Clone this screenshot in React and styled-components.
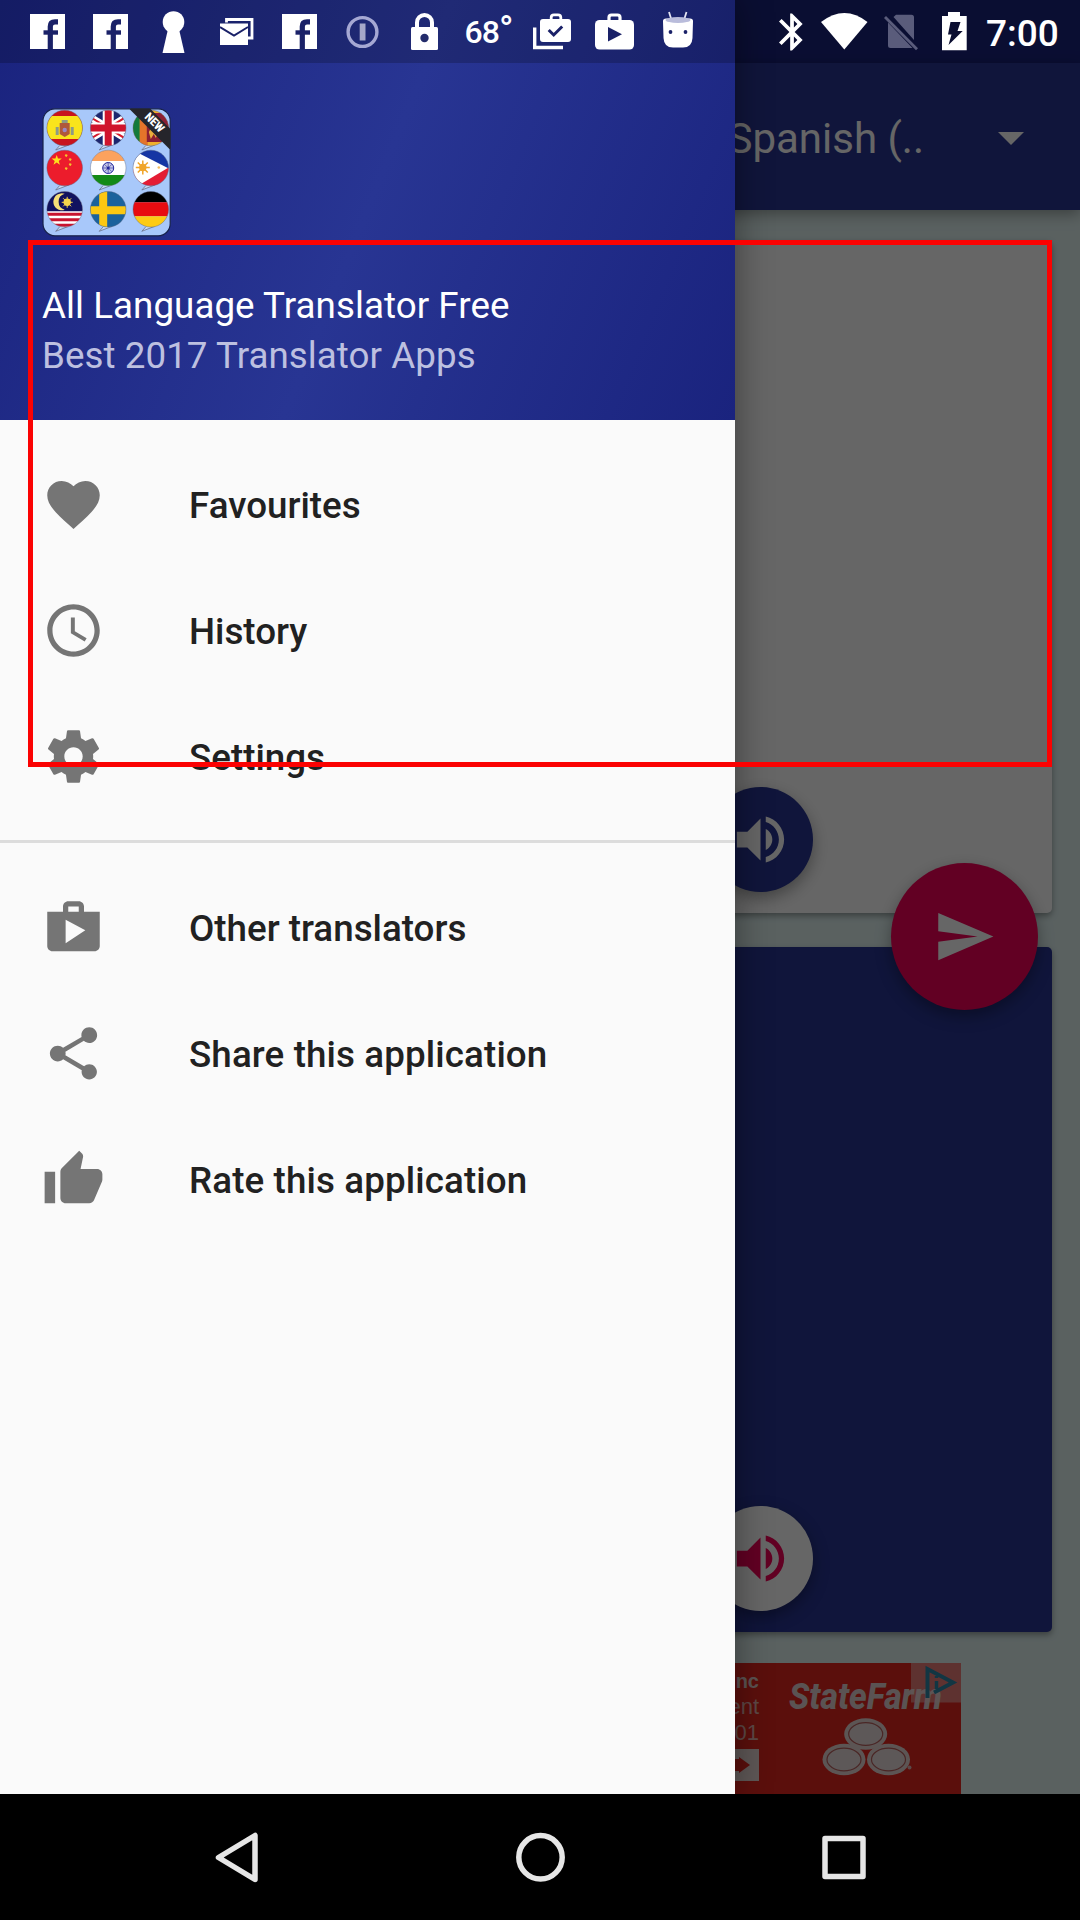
import React from "react";
import styled, { createGlobalStyle } from "styled-components";

const GlobalStyle = createGlobalStyle`
  * { box-sizing: border-box; }
  body { margin: 0; background: #000; font-family: Roboto, "Liberation Sans", sans-serif; }
  svg { display: block; flex: none; }
`;

const Screen = styled.div`
  position: relative;
  width: 1080px;
  height: 1920px;
  overflow: hidden;
  display: flex;
  flex-direction: column;
  background: #000;
`;

/* ---------- translator page under the drawer ---------- */
const Page = styled.main`
  position: relative;
  height: 1794px;
  display: flex;
  flex-direction: column;
  background: #e0f2f1;
  overflow: hidden;
`;
const StatusBacking = styled.div`
  height: 63px;
  background: #1a237e;
`;
const Toolbar = styled.header`
  height: 147px;
  display: flex;
  align-items: center;
  justify-content: flex-end;
  gap: 74px;
  padding: 4px 56px 0 0;
  background: #283593;
  color: #fff;
  box-shadow: 0 4px 14px rgba(0, 0, 0, 0.35);
`;
const Language = styled.span`
  font-size: 42px;
  line-height: 50px;
`;
const Caret = styled.span`
  border: 13px solid transparent;
  border-top-color: #fff;
  border-bottom: 0;
`;
const Content = styled.div`
  display: flex;
  flex-direction: column;
  align-items: center;
  padding: 30px 28px 0;
`;
const Card = styled.section`
  width: 1024px;
  height: ${(p) => p.$height}px;
  margin-bottom: ${(p) => p.$gap}px;
  padding: 0 239px 21px 0;
  display: flex;
  justify-content: flex-end;
  align-items: flex-end;
  border-radius: 5px;
  background: ${(p) => p.$color};
  box-shadow: 0 3px 6px rgba(0, 0, 0, 0.35);
`;
const RoundButton = styled.button`
  width: ${(p) => p.$size}px;
  height: ${(p) => p.$size}px;
  padding: 0;
  border: 0;
  border-radius: 50%;
  display: flex;
  align-items: center;
  justify-content: center;
  background: ${(p) => p.$color};
  color: ${(p) => p.$ink};
  box-shadow: 0 6px 16px rgba(0, 0, 0, 0.35);
`;
const SendSlot = styled.div`
  position: absolute;
  left: 891px;
  top: 863px;
`;
const Ad = styled.aside`
  width: 842px;
  height: 131px;
  display: flex;
  justify-content: flex-end;
  background: #e4261e;
  color: #fff;
  overflow: hidden;
`;
const AdCopy = styled.div`
  display: flex;
  flex-direction: column;
  align-items: flex-end;
  padding-top: 5px;
  font: 22px/26px "Liberation Sans", sans-serif;
  color: #e8b5b0;
`;
const AdCopyLead = styled.span`
  font-size: 20px;
  font-weight: 700;
  color: #e4cfcc;
`;
const AdArrow = styled.span`
  width: 50px;
  height: 32px;
  margin-top: 3px;
  display: flex;
  align-items: center;
  justify-content: flex-end;
  padding-right: 9px;
  background: #ead9d8;
`;
const AdBrand = styled.div`
  width: 202px;
`;
const Scrim = styled.div`
  position: absolute;
  inset: 0;
  background: rgba(0, 0, 0, 0.6);
`;

/* ---------- navigation drawer ---------- */
const Drawer = styled.nav`
  position: absolute;
  left: 0;
  top: 0;
  width: 735px;
  height: 1794px;
  background: #fafafa;
  box-shadow: 0 0 34px rgba(0, 0, 0, 0.42);
`;
const DrawerHeader = styled.div`
  height: 420px;
  padding: 109px 42px 0;
  background: linear-gradient(112deg, #1a237e 0%, #283593 50%, #1a237e 100%);
`;
const AppName = styled.div`
  margin-top: 48px;
  font-size: 36.75px;
  line-height: 43px;
  letter-spacing: 0.05px;
  color: #fff;
`;
const Tagline = styled.div`
  margin-top: 7px;
  font-size: 36.75px;
  line-height: 43px;
  letter-spacing: 0.05px;
  color: #bdc0e0;
`;
const MenuGroup = styled.ul`
  margin: 0;
  padding: 21px 0;
  list-style: none;
  border-bottom: ${(p) => (p.$divided ? "3px solid #dcdcdc" : "0")};
`;
const MenuItem = styled.li`
  height: 126px;
  display: flex;
  align-items: center;
  gap: 84px;
  padding-left: 42px;
  color: #757575;
`;
const MenuLabel = styled.span`
  font-size: 36.75px;
  font-weight: 500;
  line-height: 43px;
  padding-top: 2px;
  letter-spacing: ${(p) => (p.$wide ? "0.12px" : "0")};
  color: #212121;
`;

/* ---------- system bars ---------- */
const StatusBar = styled.div`
  position: absolute;
  inset: 0 0 auto 0;
  height: 63px;
  display: flex;
  justify-content: space-between;
  color: #fff;
`;
const Notifications = styled.div`
  width: 735px;
  display: flex;
  padding-left: 16px;
  background: rgba(0, 0, 0, 0.2);
`;
const Slot = styled.span`
  width: 63px;
  height: 63px;
  display: flex;
  align-items: center;
  justify-content: center;
`;
const Temperature = styled.span`
  font-size: 32px;
  font-weight: 500;
  letter-spacing: -1px;
`;
const Degree = styled.span`
  font-size: 38px;
  line-height: 30px;
`;
const SystemIcons = styled.div`
  display: flex;
  align-items: center;
  padding-right: 21px;
`;
const Clock = styled.span`
  width: 73px;
  margin-left: 18px;
  font-size: 37px;
  font-weight: 500;
  line-height: 43px;
  padding-top: 3px;
  white-space: nowrap;
`;
const NavBar = styled.footer`
  height: 126px;
  display: flex;
  justify-content: center;
  background: #000;
`;
const Highlight = styled.div`
  position: absolute;
  left: 28px;
  top: 240px;
  width: 1024px;
  height: 527px;
  border: 5px solid #fb0202;
  pointer-events: none;
`;

const paths = {
  heart:
    "M12 21.35l-1.45-1.32C5.4 15.36 2 12.28 2 8.5 2 5.42 4.42 3 7.5 3c1.74 0 3.41.81 4.5 2.09C13.09 3.81 14.76 3 16.5 3 19.58 3 22 5.42 22 8.5c0 3.78-3.4 6.86-8.55 11.54L12 21.35z",
  clock:
    "M11.99 2C6.47 2 2 6.48 2 12s4.47 10 9.99 10C17.52 22 22 17.52 22 12S17.52 2 11.99 2zM12 20c-4.42 0-8-3.58-8-8s3.58-8 8-8 8 3.58 8 8-3.58 8-8 8zM12.5 7H11v6l5.25 3.15.75-1.23-4.5-2.67z",
  gear:
    "M19.43 12.98c.04-.32.07-.64.07-.98s-.03-.66-.07-.98l2.11-1.65c.19-.15.24-.42.12-.64l-2-3.46c-.12-.22-.39-.3-.61-.22l-2.49 1c-.52-.4-1.08-.73-1.69-.98l-.38-2.65C14.46 2.18 14.25 2 14 2h-4c-.25 0-.46.18-.49.42l-.38 2.65c-.61.25-1.17.59-1.69.98l-2.49-1c-.23-.09-.49 0-.61.22l-2 3.46c-.13.22-.07.49.12.64l2.11 1.65c-.04.32-.07.65-.07.98s.03.66.07.98l-2.11 1.65c-.19.15-.24.42-.12.64l2 3.46c.12.22.39.3.61.22l2.49-1c.52.4 1.08.73 1.69.98l.38 2.65c.03.24.24.42.49.42h4c.25 0 .46-.18.49-.42l.38-2.65c.61-.25 1.17-.59 1.69-.98l2.49 1c.23.09.49 0 .61-.22l2-3.46c.12-.22.07-.49-.12-.64l-2.11-1.65zM12 15.5c-1.93 0-3.5-1.57-3.5-3.5s1.57-3.5 3.5-3.5 3.5 1.57 3.5 3.5-1.57 3.5-3.5 3.5z",
  shop:
    "M16 6V4c0-1.11-.89-2-2-2h-4c-1.11 0-2 .89-2 2v2H2v13c0 1.11.89 2 2 2h16c1.11 0 2-.89 2-2V6h-6zm-6-2h4v2h-4V4zM9 18V9l7.5 4L9 18z",
  share:
    "M18 16.08c-.76 0-1.44.3-1.96.77L8.91 12.7c.05-.23.09-.46.09-.7s-.04-.47-.09-.7l7.05-4.11c.54.5 1.25.81 2.04.81 1.66 0 3-1.34 3-3s-1.34-3-3-3-3 1.34-3 3c0 .24.04.47.09.7L8.04 9.81C7.5 9.31 6.79 9 6 9c-1.66 0-3 1.34-3 3s1.34 3 3 3c.79 0 1.5-.31 2.04-.81l7.12 4.16c-.05.21-.08.43-.08.65 0 1.61 1.31 2.92 2.92 2.92 1.61 0 2.92-1.31 2.92-2.92s-1.31-2.92-2.92-2.92z",
  thumb:
    "M1 21h4V9H1v12zm22-11c0-1.1-.9-2-2-2h-6.31l.95-4.57.03-.32c0-.41-.17-.79-.44-1.06L14.17 1 7.59 7.59C7.22 7.95 7 8.45 7 9v10c0 1.1.9 2 2 2h9c.83 0 1.54-.5 1.84-1.22l3.02-7.05c.09-.23.14-.47.14-.73v-1.91l-.01-.01L23 10z",
  volume:
    "M3 9v6h4l5 5V4L7 9H3zm13.5 3c0-1.77-1.02-3.29-2.5-4.03v8.05c1.48-.73 2.5-2.25 2.5-4.02zM14 3.23v2.06c2.89.86 5 3.54 5 6.71s-2.11 5.85-5 6.71v2.06c4.01-.91 7-4.49 7-8.77s-2.99-7.86-7-8.77z",
  send: "M2.01 21L23 12 2.01 3 2 10l15 2-15 2z",
};

const Glyph = ({ name, size = 63 }) => (
  <svg width={size} height={size} viewBox="0 0 24 24" fill="currentColor" fillRule="evenodd">
    <path d={paths[name]} />
  </svg>
);

const Facebook = () => (
  <svg width="35" height="35" viewBox="0 0 35 35">
    <rect width="35" height="35" fill="#fff" />
    <path d="M20.3 35V12.5Q20.3 7.8 25 7.8H28" fill="none" stroke="#1a2168" strokeWidth="5.2" />
    <path d="M13.5 18.5H28" stroke="#1a2168" strokeWidth="4.4" />
  </svg>
);
const Keyhole = () => (
  <svg width="23" height="42" viewBox="0 0 23 42" fill="#fff">
    <circle cx="11.5" cy="11" r="10.8" />
    <path d="M6.5 16h10l6 26H.5z" />
  </svg>
);
const Mail = () => (
  <svg width="34" height="27" viewBox="0 0 34 27">
    <path d="M6.5 4.5V1.5H32V20h-4" fill="none" stroke="#fff" strokeWidth="2.8" />
    <rect x="0" y="5.5" width="28" height="21.5" fill="#fff" />
    <path d="M0 9l14 8.5L28 9" fill="none" stroke="#1a2168" strokeWidth="2" />
  </svg>
);
const Info = () => (
  <svg width="34" height="34" viewBox="0.500 0 34 34">
    <circle cx="17" cy="17" r="14.4" fill="none" stroke="#a5a8d3" strokeWidth="3.4" />
    <path d="M14.2 8.5h5.8v17h-5.8z" fill="#a5a8c9" />
  </svg>
);
const Lock = () => (
  <svg width="29" height="37" viewBox="0 0 29 37">
    <path d="M6 16V9.5a7.5 7.5 0 0 1 15 0V16" fill="none" stroke="#fff" strokeWidth="4" />
    <rect x="0" y="14" width="27" height="23" rx="1.5" fill="#fff" />
    <circle cx="13.5" cy="25" r="4.2" fill="#232c6b" />
  </svg>
);
const BagCheck = () => (
  <svg width="38" height="37" viewBox="0 0 38 37">
    <path d="M1.7 14.5V34.5H30" fill="none" stroke="#fff" strokeWidth="3.4" />
    <path d="M18.2 8V4.5Q18.2 1.8 21 1.8h4q2.8 0 2.8 2.7V8" fill="none" stroke="#fff" strokeWidth="2.8" />
    <rect x="7" y="6" width="31" height="23" rx="3" fill="#fff" />
    <path d="M15.7 17l5 5 8.5-8.5" fill="none" stroke="#1a2168" strokeWidth="3" />
  </svg>
);
const BagPlay = () => (
  <svg width="39" height="37" viewBox="0 0 39 37">
    <path d="M14 8V4.5Q14 2 16.5 2h6q2.5 0 2.5 2.5V8" fill="none" stroke="#fff" strokeWidth="3.2" />
    <rect x="0" y="7" width="39" height="29.5" rx="4.5" fill="#fff" />
    <path d="M13 14v14.5L27 21.2z" fill="#1a2168" />
  </svg>
);
const Robot = () => (
  <svg width="32" height="42" viewBox="0 0 32 42">
    <path d="M7 1l2.5 8M24.5 1l-2.5 8" stroke="#e4e5f2" strokeWidth="1.8" />
    <path d="M1 10q0-2.500 3-2.500h24q3 0 3 2.500l-.5 17q-.5 9.500-9.500 9.500h-10q-9 0-9.500-9.500z" fill="#fff" />
    <ellipse cx="16" cy="9" rx="12.500" ry="3" fill="#b9bcdb" />
    <circle cx="8.500" cy="21" r="1.900" fill="#1a2168" />
    <circle cx="23.500" cy="21" r="1.900" fill="#1a2168" />
  </svg>
);

const SystemGlyphs = () => (
  <svg width="190" height="63" viewBox="779 0 190 63">
    <path
      transform="translate(770.700 9.700) scale(1.860)"
      fill="#fff"
      d="M17.71 7.71L12 2h-1v7.590L6.410 5 5 6.410 10.590 12 5 17.590 6.410 19 11 14.410V22h1l5.710-5.710-4.300-4.290 4.300-4.290zM13 5.830l1.880 1.880L13 9.590V5.830zm1.880 10.460L13 18.170v-3.760l1.880 1.880z"
    />
    <path d="M822 22Q845.500 4 868.500 22L845.300 49.500z" fill="#fff" />
    <path d="M894.500 17l2.500-2.300h15.500q2.500 0 2.500 2.500V40zM889 22.500l24.500 25.500H891.500q-2.500 0-2.500-2.500z" fill="#5a5c7b" />
    <path d="M886 17l32 32.300" stroke="#5a5c7b" strokeWidth="2.800" />
    <path d="M943 16h6v-4h12v4h6.700v34.300H943z" fill="#fff" />
    <path d="M951.500 22h10l-3 9h5.200L949.500 45l3-10.500H949z" fill="#0a0d30" />
  </svg>
);

const flagColumns = [64.7, 108.2, 150.8];
const flagRows = [128, 168, 209.3];

const flags = [
  // Spain
  <g key="es">
    <path fill="#c8141e" d="M-20-20h40v40h-40z" />
    <path fill="#f9e41c" d="M-20-12h40v23h-40z" />
    <path fill="#b0583a" d="M-5-5h10V6l-5 3-5-3z" />
    <path fill="#8d9a86" d="M-9-1h3v8h-3zM6-1h3v8H6zM-3-8h6v3h-6z" />
    <circle r="2.200" cy="2" fill="#9b87c4" />
  </g>,
  // United Kingdom
  <g key="uk">
    <path fill="#1c2670" d="M-20-20h40v40h-40z" />
    <path stroke="#fff" strokeWidth="7" d="M-26-16L26 16M26-16L-26 16" />
    <path stroke="#d51a2c" strokeWidth="2" d="M-26-16L26 16M26-16L-26 16" />
    <path stroke="#fff" strokeWidth="11" d="M0-20v40M-20 0h40" />
    <path stroke="#d0142c" strokeWidth="7" d="M0-20v40M-20 0h40" />
  </g>,
  // Sri Lanka
  <g key="lk">
    <path fill="#efb02c" d="M-20-20h40v40h-40z" />
    <path fill="#127a3c" d="M-20-20h9v40h-9z" />
    <path fill="#e4742a" d="M-11-20h8v40h-8z" />
    <path fill="#8c1f33" d="M-4-15h24v29H-4z" />
    <path fill="#e9ae3c" d="M-2 4l4-7 5 2-3 3 5-1 4-4v9l-5-2-3 6-2-4-3 5z" />
  </g>,
  // China
  <g key="cn">
    <path fill="#ec1c2c" d="M-20-20h40v40h-40z" />
    <path fill="#fde11c" d="M-8-13l1.300 3.600h3.800L-6-7l1.200 3.700L-8-5.500l-3.200 2.200L-10-7l-3.100-2.400h3.800z" />
    <path fill="#f5c52a" d="M1-14l2 1-1 2-2-1zM5-10l2 1-1 2-2-1zM5-5l2 1-1 2-2-1zM1-1l2 1-1 2-2-1z" />
  </g>,
  // India
  <g key="in">
    <path fill="#fff" d="M-20-20h40v40h-40z" />
    <path fill="#fba25e" d="M-20-20h40V-7h-40z" />
    <path fill="#138a16" d="M-20 7h40v13h-40z" />
    <circle r="5.500" fill="#c7c9e8" stroke="#22259a" strokeWidth="1" />
    <path stroke="#22259a" strokeWidth=".6" d="M0-5v10M-5 0H5M-3.500-3.500l7 7M3.500-3.500l-7 7" />
    <circle r="1.500" fill="#22259a" />
  </g>,
  // Philippines
  <g key="ph">
    <path fill="#1535a4" d="M-20-20h40V0h-40z" />
    <path fill="#e41c34" d="M-20 0h40v20h-40z" />
    <path fill="#fff" d="M-20-19L17 0l-37 22z" />
    <path stroke="#f0a52a" strokeWidth="1.500" d="M-8-7.500v14M-15-.5H-1M-13-5.500l10 10M-3-5.500l-10 10" />
    <circle cx="-8" cy="-.5" r="3.700" fill="#f0a52a" />
    <circle cx="8" cy="-.5" r="1.300" fill="#f3bd63" />
  </g>,
  // Malaysia
  <g key="my">
    <path fill="#fff" d="M-20-20h40v40h-40z" />
    <path stroke="#c81430" strokeWidth="3" d="M-20 5h40M-20 10.500h40M-20 16h40" />
    <path fill="#10125f" d="M-20-20h40V2h-40z" />
    <path fill="#f5df78" d="M0-15.500A8.500 8.500 0 1 0 0 .5A8.300 8.300 0 0 1 0-15.500z" />
    <circle cx="2.500" cy="-7" r="3.700" fill="#f5d44c" />
    <path stroke="#f5d44c" strokeWidth="1" d="M2.500-12.500v11M-3-7H8M-1.500-11l8 8M6.500-11l-8 8" />
  </g>,
  // Sweden
  <g key="se">
    <path fill="#1b629c" d="M-20-20h40v40h-40z" />
    <path stroke="#fcc812" strokeWidth="8" d="M-5-20v40M-20 1h40" />
  </g>,
  // Germany
  <g key="de">
    <path fill="#000" d="M-20-20h40v13h-40z" />
    <path fill="#e80c10" d="M-20-7h40V7h-40z" />
    <path fill="#fdcb14" d="M-20 7h40v13h-40z" />
  </g>,
];

const AppIcon = () => (
  <svg width="129" height="127" viewBox="42 109 129 127" overflow="visible">
    <defs>
      <clipPath id="disc">
        <circle r="17.800" />
      </clipPath>
      <clipPath id="tile">
        <rect x="43" y="108.500" width="127.500" height="127.500" rx="12" />
      </clipPath>
    </defs>
    <rect x="43" y="108.800" width="127.200" height="127" rx="12" fill="#a8c8fa" stroke="#17224a" strokeWidth="1.200" />
    {flags.map((flag, i) => (
      <g key={flag.key} transform={`translate(${flagColumns[i % 3]} ${flagRows[Math.floor(i / 3)]})`}>
        <path d="M-5 17.500L-9 22L4 17" fill="#c4d9f6" stroke="#69718a" strokeWidth=".8" />
        <g clipPath="url(#disc)">{flag}</g>
        <circle r="17.800" fill="none" stroke="#56607a" strokeOpacity=".5" strokeWidth=".8" />
      </g>
    ))}
    <g clipPath="url(#tile)">
      <path d="M135 104L175 144" stroke="#25252b" strokeWidth="15" />
    </g>
    <text
      transform="translate(154.800 122.300) rotate(45)"
      textAnchor="middle"
      y="4.200"
      fill="#fff"
      fontFamily="Roboto"
      fontSize="11.500"
      fontWeight="900"
      textLength="22"
      lengthAdjust="spacingAndGlyphs"
    >
      NEW
    </text>
  </svg>
);

const AdArt = () => (
  <svg width="202" height="131" viewBox="759 1663 202 131">
    <text
      x="789"
      y="1709"
      fill="#e0d0cf"
      fontFamily="Roboto"
      fontSize="37"
      fontStyle="italic"
      fontWeight="800"
      textLength="153"
      lengthAdjust="spacingAndGlyphs"
    >
      StateFarm
    </text>
    {[
      [865.7, 1734],
      [844, 1759.5],
      [888.5, 1759.5],
    ].map(([x, y]) => (
      <g key={x}>
        <ellipse cx={x} cy={y} rx="21.500" ry="15.800" fill="#e6d4d3" />
        <ellipse cx={x} cy={y} rx="17" ry="11.300" fill="#e9dcdc" stroke="#b8605d" strokeWidth="1.200" />
      </g>
    ))}
    <circle cx="909.500" cy="1767.500" r="2" fill="#e0b5b3" />
    <rect x="911" y="1663" width="50" height="39.500" fill="#f4d6d4" fillOpacity=".5" />
    <path d="M927.500 1698V1669L953 1682.500L934 1692.500" fill="none" stroke="#2f87a8" strokeWidth="4" />
    <path d="M936.500 1681v8M936.500 1676v2" stroke="#2f87a8" strokeWidth="3.500" />
  </svg>
);

const menu = [
  [
    ["heart", "Favourites"],
    ["clock", "History"],
    ["gear", "Settings"],
  ],
  [
    ["shop", "Other translators"],
    ["share", "Share this application", true],
    ["thumb", "Rate this application", true],
  ],
];

const notifications = [Facebook, Facebook, Keyhole, Mail, Facebook, Info, Lock, null, BagCheck, BagPlay, Robot];

export default function App() {
  return (
    <Screen>
      <GlobalStyle />
      <Page>
        <StatusBacking />
        <Toolbar>
          <Language>Spanish (..</Language>
          <Caret />
        </Toolbar>
        <Content>
          <Card $height={673} $gap={34} $color="#fff">
            <RoundButton $size={105} $color="#283593" $ink="#fff">
              <Glyph name="volume" />
            </RoundButton>
          </Card>
          <Card $height={685} $gap={31} $color="#283593">
            <RoundButton $size={105} $color="#fff" $ink="#f50057">
              <Glyph name="volume" />
            </RoundButton>
          </Card>
          <Ad>
            <AdCopy>
              <AdCopyLead>nc</AdCopyLead>
              <span>ent</span>
              <span>01</span>
              <AdArrow>
                <svg width="24" height="16" viewBox="0 0 24 16">
                  <path d="M0 2h13V0l11 8-11 8v-2H0z" fill="#e4261e" />
                </svg>
              </AdArrow>
            </AdCopy>
            <AdBrand>
              <AdArt />
            </AdBrand>
          </Ad>
        </Content>
        <SendSlot>
          <RoundButton $size={147} $color="#f50057" $ink="#fff">
            <Glyph name="send" />
          </RoundButton>
        </SendSlot>
        <Scrim />
      </Page>
      <Drawer>
        <DrawerHeader>
          <AppIcon />
          <AppName>All Language Translator Free</AppName>
          <Tagline>Best 2017 Translator Apps</Tagline>
        </DrawerHeader>
        {menu.map((items, i) => (
          <MenuGroup key={i} $divided={i === 0}>
            {items.map(([icon, label, wide]) => (
              <MenuItem key={label}>
                <Glyph name={icon} />
                <MenuLabel $wide={wide}>{label}</MenuLabel>
              </MenuItem>
            ))}
          </MenuGroup>
        ))}
      </Drawer>
      <NavBar>
        <svg width="652" height="126" viewBox="214 1794 652 126" fill="none" stroke="#e6e6e6" strokeWidth="5.500" strokeLinejoin="round">
          <path d="M255 1835.500V1879.500L218.500 1857.500z" />
          <circle cx="540.500" cy="1857.300" r="21.700" />
          <rect x="825" y="1838.500" width="38" height="38" />
        </svg>
      </NavBar>
      <StatusBar>
        <Notifications>
          {notifications.map((Icon, i) => (
            <Slot key={i}>
              {Icon ? (
                <Icon />
              ) : (
                <Temperature>
                  68<Degree>°</Degree>
                </Temperature>
              )}
            </Slot>
          ))}
        </Notifications>
        <SystemIcons>
          <SystemGlyphs />
          <Clock>7:00</Clock>
        </SystemIcons>
      </StatusBar>
      <Highlight />
    </Screen>
  );
}
